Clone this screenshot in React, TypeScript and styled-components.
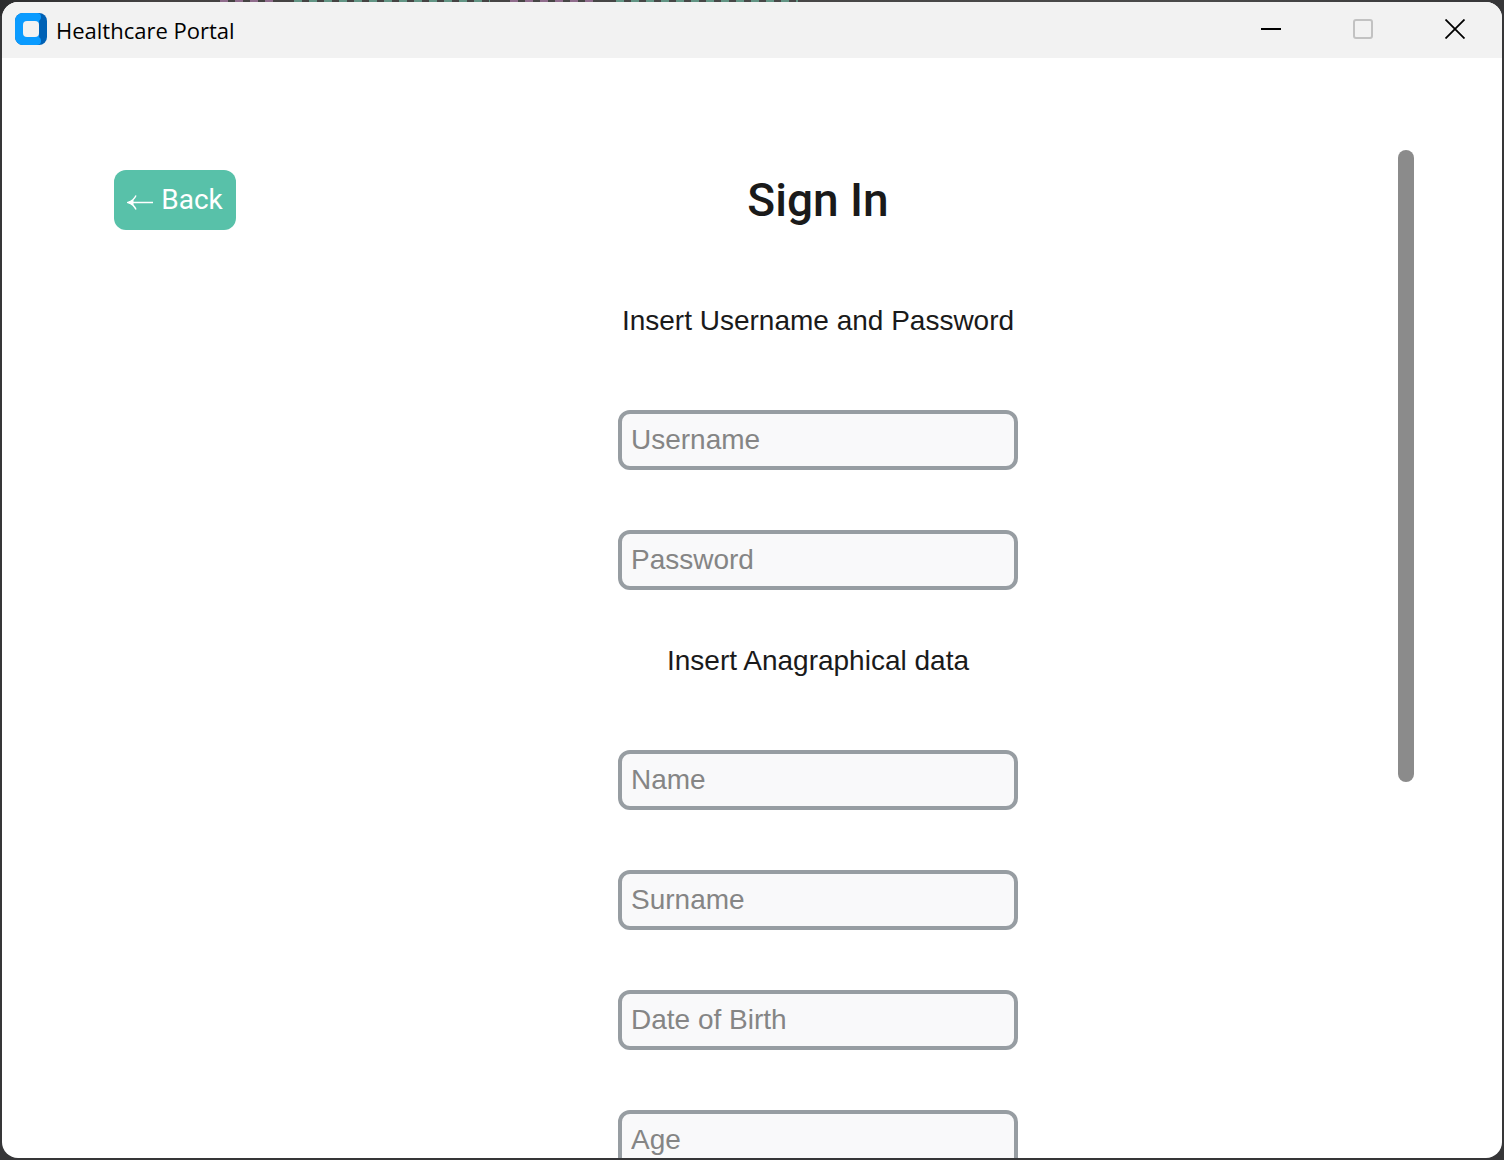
import React from "react";
import styled, { createGlobalStyle } from "styled-components";

const GlobalStyle = createGlobalStyle`
  *, *::before, *::after { box-sizing: border-box; }
  body { margin: 0; background: #363638; }
`;

const sans = `"Liberation Sans", Arial, sans-serif`;

const dashes = (color: string) =>
  `repeating-linear-gradient(90deg, ${color} 0 8px, transparent 8px 15px)`;

/* The editor behind the window shows only as a thin strip of coloured dashes. */
const Desktop = styled.div`
  height: 100vh;
  padding: 2px;
  overflow: hidden;
  background:
    ${dashes("#8f6c8c")} 220px 0 / 58px 2px no-repeat,
    ${dashes("#629484")} 294px 0 / 196px 2px no-repeat,
    ${dashes("#8f6c8c")} 510px 0 / 88px 2px no-repeat,
    ${dashes("#629484")} 616px 0 / 182px 2px no-repeat,
    linear-gradient(90deg, #2c2c2e, #444242 10%, #4a4a4a 80%, #363638) top / 100% 16px no-repeat,
    #363638;
`;

const Window = styled.div`
  display: flex;
  flex-direction: column;
  height: 100%;
  overflow: hidden;
  border-radius: 16px;
  background: #ffffff;
`;

const TitleBar = styled.header`
  display: flex;
  flex: none;
  align-items: center;
  height: 56px;
  padding: 0 1px 2px 13px;
  background: #f2f2f2;
`;

const AppTitle = styled.span`
  flex: 1;
  margin-left: 9px;
  padding-top: 2px;
  color: #000000;
  font: 400 22px/32px "Open Sans", "Noto Sans", sans-serif;
`;

const WindowControls = styled.div`
  display: flex;
  align-self: stretch;
`;

const WindowButton = styled.button`
  display: grid;
  place-items: center;
  width: 92px;
  padding: 0;
  border: 0;
  background: transparent;
  color: #000000;

  &:disabled { color: #c2c2c2; }
`;

const Content = styled.main`
  display: grid;
  grid-template-columns: 122px 1fr 16px;
  flex: 1;
  min-height: 0;
  padding: 92px 88px 0 112px;
`;

const BackButton = styled.button`
  display: flex;
  align-items: center;
  justify-content: center;
  gap: 8px;
  height: 60px;
  margin-top: 20px;
  padding: 0;
  border: 0;
  border-radius: 12px;
  background: #58c1a9;
  color: #ffffff;
  font: 400 28px/32px Roboto, sans-serif;
`;

const Form = styled.form`
  display: flex;
  flex-direction: column;
  align-items: center;
  gap: 40px;
  padding: 20px 0 0 2px;
`;

const Heading = styled.h1`
  margin: 0 0 20px;
  color: #1a1a1a;
  font: 500 46px/60px Roboto, sans-serif;
`;

const Group = styled.fieldset`
  display: flex;
  flex-direction: column;
  align-items: center;
  gap: 60px;
  min-width: 0;
  margin: 0;
  padding: 0;
  border: 0;
`;

const Legend = styled.legend`
  float: left;
  height: 60px;
  padding: 0;
  color: #1a1a1a;
  font: 400 28px/62px ${sans};
`;

const Field = styled.input`
  width: 400px;
  height: 60px;
  padding: 0 9px;
  border: 4px solid #979da2;
  border-radius: 12px;
  background: #f9f9fa;
  color: #1a1a1a;
  font: 400 28px/32px ${sans};

  &::placeholder { color: #858585; opacity: 1; }
`;

const ScrollThumb = styled.div`
  height: 632px;
  border-radius: 8px;
  background: #8b8b8b;
`;

const Logo = () => (
  <svg width="32" height="32" viewBox="0 0 32 32" aria-hidden="true">
    <rect width="32" height="32" rx="8" fill="#0061b5" />
    <path
      d="M8 0H22a4 4 0 0 1 4 4a4 4 0 0 1-2 4V24a4 4 0 0 1 2 4a4 4 0 0 1-4 4H8a8 8 0 0 1-8-8V8a8 8 0 0 1 8-8Z"
      fill="#0a9bff"
    />
    <rect x="8" y="8" width="16" height="16" rx="4" fill="#f2f2f2" />
  </svg>
);

const BackArrow = () => (
  <svg width="26" height="20" viewBox="0 0 26 20" fill="none" stroke="currentColor" aria-hidden="true">
    <path d="M3 12.500H26" strokeWidth="1.4" />
    <path d="M9 5.500C7.500 9 5 11.200 1 12.500C5 13.800 7.500 16 9 19.500" strokeWidth="1.4" />
    <path d="M1 12.500L6.500 9.500V15.500Z" fill="currentColor" stroke="none" />
  </svg>
);

const MinimizeIcon = () => (
  <svg width="20" height="20" viewBox="0 0 20 20" aria-hidden="true">
    <path d="M0 10H20" stroke="currentColor" strokeWidth="2" />
  </svg>
);

const MaximizeIcon = () => (
  <svg width="20" height="20" viewBox="0 0 20 20" aria-hidden="true">
    <rect x="1" y="1" width="18" height="18" rx="2" fill="none" stroke="currentColor" strokeWidth="2" />
  </svg>
);

const CloseIcon = () => (
  <svg width="20" height="20" viewBox="0 0 20 20" aria-hidden="true">
    <path d="M0.500 0.500L19.500 19.500M19.500 0.500L0.500 19.500" stroke="currentColor" strokeWidth="1.8" />
  </svg>
);

const groups = [
  { title: "Insert Username and Password", fields: ["Username", "Password"] },
  { title: "Insert Anagraphical data", fields: ["Name", "Surname", "Date of Birth", "Age"] },
];

export default function App() {
  return (
    <Desktop>
      <GlobalStyle />
      <Window>
        <TitleBar>
          <Logo />
          <AppTitle>Healthcare Portal</AppTitle>
          <WindowControls>
            <WindowButton type="button" aria-label="Minimize"><MinimizeIcon /></WindowButton>
            <WindowButton type="button" aria-label="Maximize" disabled><MaximizeIcon /></WindowButton>
            <WindowButton type="button" aria-label="Close"><CloseIcon /></WindowButton>
          </WindowControls>
        </TitleBar>
        <Content>
          <BackButton type="button"><BackArrow />Back</BackButton>
          <Form>
            <Heading>Sign In</Heading>
            {groups.map((group) => (
              <Group key={group.title}>
                <Legend>{group.title}</Legend>
                {group.fields.map((name) => (
                  <Field
                    key={name}
                    type={name === "Password" ? "password" : "text"}
                    aria-label={name}
                    placeholder={name}
                  />
                ))}
              </Group>
            ))}
          </Form>
          <ScrollThumb />
        </Content>
      </Window>
    </Desktop>
  );
}
